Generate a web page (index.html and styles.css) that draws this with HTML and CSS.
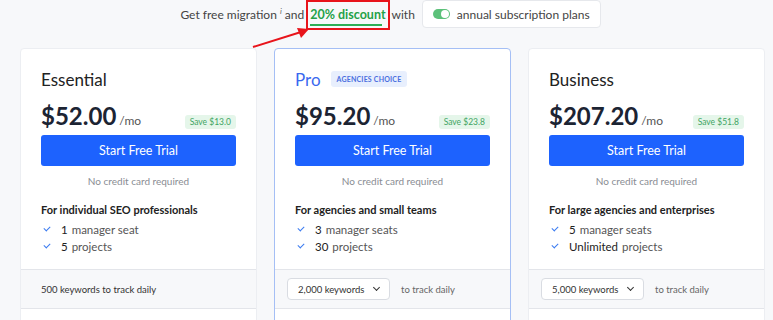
FILE: index.html
```html
<!DOCTYPE html>
<html lang="en">
<head>
    <meta charset="UTF-8">
    <meta name="viewport" content="width=device-width, initial-scale=1.0">
    <title>Pricing</title>
    <link rel="stylesheet" href="styles.css">
</head>
<body>

<div class="promo">
    <span class="promo-text">Get free migration <sup class="info">i</sup> and<span class="discount">20% discount</span>with</span>
    <label class="toggle-box">
        <span class="toggle"><span class="knob"></span></span>
        annual subscription plans
    </label>
    <svg class="arrow" width="70" height="30" viewBox="0 0 70 30">
        <line x1="4" y1="26" x2="52" y2="11" stroke="#e8141b" stroke-width="2"/>
        <polygon points="60,8 48,7 52,17" fill="#e8141b"/>
    </svg>
</div>

<div class="plans">
    <div class="card">
        <div class="card-body">
            <h2 class="plan-name">Essential</h2>
            <div class="price-row">
                <span class="price">$52.00</span><span class="per">/mo</span>
                <span class="save">Save $13.0</span>
            </div>
            <button class="trial">Start Free Trial</button>
            <p class="note">No credit card required</p>
            <h3 class="audience">For individual SEO professionals</h3>
            <ul class="features">
                <li><span class="check"></span><b>1</b> manager seat</li>
                <li><span class="check"></span><b>5</b> projects</li>
            </ul>
        </div>
        <div class="keywords">
            <span class="kw-plain">500 keywords to track daily</span>
        </div>
    </div>

    <div class="card card-pro">
        <div class="card-body">
            <h2 class="plan-name pro-name">Pro <span class="badge">AGENCIES CHOICE</span></h2>
            <div class="price-row">
                <span class="price">$95.20</span><span class="per">/mo</span>
                <span class="save">Save $23.8</span>
            </div>
            <button class="trial">Start Free Trial</button>
            <p class="note">No credit card required</p>
            <h3 class="audience">For agencies and small teams</h3>
            <ul class="features">
                <li><span class="check"></span><b>3</b> manager seats</li>
                <li><span class="check"></span><b>30</b> projects</li>
            </ul>
        </div>
        <div class="keywords">
            <div class="select">2,000 keywords <span class="chev"></span></div>
            <span class="kw-tail">to track daily</span>
        </div>
    </div>

    <div class="card">
        <div class="card-body">
            <h2 class="plan-name">Business</h2>
            <div class="price-row">
                <span class="price">$207.20</span><span class="per">/mo</span>
                <span class="save">Save $51.8</span>
            </div>
            <button class="trial">Start Free Trial</button>
            <p class="note">No credit card required</p>
            <h3 class="audience">For large agencies and enterprises</h3>
            <ul class="features">
                <li><span class="check"></span><b>5</b> manager seats</li>
                <li><span class="check"></span><b>Unlimited</b> projects</li>
            </ul>
        </div>
        <div class="keywords">
            <div class="select">5,000 keywords <span class="chev"></span></div>
            <span class="kw-tail">to track daily</span>
        </div>
    </div>
</div>

</body>
</html>
```

FILE: styles.css
```css
body {
    margin: 0;
    background-color: #f7f8fa;
    font-family: Lato, "Noto Sans", sans-serif;
    color: #222;
    height: 320px;
    overflow: hidden;
}
.promo {
    position: relative;
    display: flex;
    justify-content: center;
    align-items: center;
    gap: 7px;
    height: 30px;
    padding-left: 8px;
    font-size: 12px;
    color: #444;
}
.info {
    font-size: 8px;
    font-style: italic;
    color: #666;
}
.discount {
    display: inline-block;
    margin: 0 2px;
    color: #24a148;
    font-weight: 700;
    font-size: 12.5px;
    padding: 5px 2px 6px;
    border: 2px solid #e8141b;
    background-image: linear-gradient(#2eae56, #2eae56);
    background-size: 72px 2px;
    background-position: 2px 22px;
    background-repeat: no-repeat;
}
.toggle-box {
    display: flex;
    align-items: center;
    gap: 7px;
    height: 28px;
    box-sizing: border-box;
    margin-top: -2px;
    background-color: #fff;
    border: 1px solid #e6e8ec;
    border-radius: 4px;
    padding: 0 10px;
    color: #444;
}
.toggle {
    width: 17px;
    height: 10px;
    border-radius: 5px;
    background-color: #5cc17a;
    position: relative;
}
.knob {
    position: absolute;
    right: 1px;
    top: 1px;
    width: 8px;
    height: 8px;
    border-radius: 50%;
    background-color: #fff;
}
.arrow {
    position: absolute;
    left: 249px;
    top: 21px;
}
.plans {
    display: grid;
    grid-template-columns: repeat(3, 237px);
    gap: 17px;
    padding-left: 20px;
    margin-top: 18px;
}
.card {
    background-color: #fff;
    border: 1px solid #eceef2;
    border-radius: 4px;
    height: 300px;
}
.card-pro {
    border-color: #a5bff5;
}
.card-body {
    padding: 19px 20px 0;
    height: 201px;
}
.plan-name {
    margin: 0;
    font-size: 17px;
    font-weight: 400;
    height: 22px;
    display: flex;
    align-items: center;
    color: #222;
}
.pro-name {
    color: #3a68ef;
    gap: 10px;
}
.badge {
    font-size: 7px;
    font-weight: 700;
    letter-spacing: 0.2px;
    color: #4a6ee0;
    background-color: #e8effd;
    border-radius: 3px;
    padding: 4px 6px;
}
.price-row {
    display: flex;
    align-items: baseline;
    margin-top: 11px;
    height: 28px;
}
.price {
    font-size: 24px;
    font-weight: 700;
    color: #1c2433;
}
.per {
    font-size: 12px;
    color: #555;
    margin-left: 3px;
}
.save {
    margin-left: auto;
    font-size: 8.5px;
    color: #3fa463;
    background-color: #e5f6ea;
    border-radius: 3px;
    padding: 2px 5px;
}
.trial {
    display: block;
    width: 100%;
    height: 31px;
    margin-top: 6px;
    border: none;
    border-radius: 3px;
    background-color: #1d62fe;
    color: #fff;
    font-family: inherit;
    font-size: 12.5px;
}
.note {
    margin: 9px 0 0;
    text-align: center;
    font-size: 10px;
    color: #8a8d93;
}
.audience {
    margin: 16px 0 0;
    font-size: 11px;
    font-weight: 700;
    color: #222;
}
.features {
    list-style: none;
    margin: 5px 0 0;
    padding: 0;
}
.features li {
    display: flex;
    align-items: center;
    height: 17px;
    font-size: 11.5px;
    color: #555;
}
.features b {
    font-weight: 400;
    color: #222;
    margin-right: 4px;
}
.check {
    width: 5px;
    height: 3px;
    border-left: 1px solid #3c7cf0;
    border-bottom: 1px solid #3c7cf0;
    transform: rotate(-45deg);
    margin: 0 11px 3px 3px;
}
.keywords {
    display: flex;
    align-items: center;
    gap: 11px;
    height: 38px;
    padding: 0 12px;
    background-color: #f7f8fa;
    border-top: 1px solid #e3e5ea;
    border-bottom: 1px solid #e3e5ea;
    font-size: 9.5px;
}
.kw-plain {
    padding-left: 8px;
    color: #333;
}
.kw-tail {
    color: #666;
}
.select {
    display: flex;
    align-items: center;
    justify-content: space-between;
    width: 103px;
    height: 22px;
    box-sizing: border-box;
    padding: 0 10px;
    background-color: #fff;
    border: 1px solid #d9dce2;
    border-radius: 4px;
    color: #333;
}
.chev {
    width: 4px;
    height: 4px;
    border-right: 1.5px solid #333;
    border-bottom: 1.5px solid #333;
    transform: rotate(45deg);
    margin-bottom: 3px;
}
```
